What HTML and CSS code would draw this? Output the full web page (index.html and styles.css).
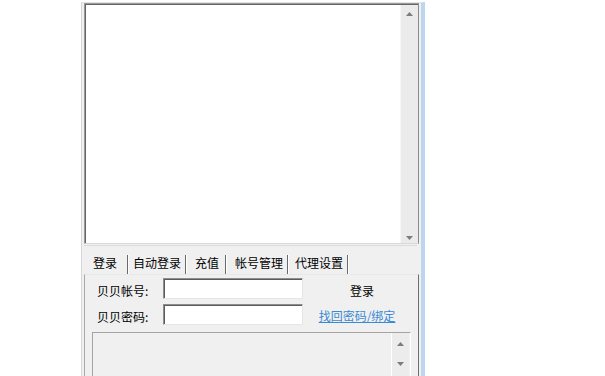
FILE: index.html
```html
<!DOCTYPE html>
<html lang="zh">
<head>
<meta charset="utf-8">
<title>登录</title>
<link rel="stylesheet" href="styles.css">
</head>
<body>
<div class="win">
  <div class="chat">
    <div class="chat-body"></div>
    <div class="vscroll">
      <svg class="arrow" width="9" height="6" viewBox="0 0 9 6"><path d="M4.5 1 L8 5 L1 5 Z" fill="#7c7c7c"/></svg>
      <svg class="arrow" width="9" height="6" viewBox="0 0 9 6"><path d="M1 1 L8 1 L4.5 5 Z" fill="#7c7c7c"/></svg>
    </div>
  </div>
  <div class="tabs">
    <span class="tab tab-a">登录</span>
    <span class="tab tab-b">自动登录</span>
    <span class="tab tab-c">充值</span>
    <span class="tab tab-d">帐号管理</span>
    <span class="tab tab-e">代理设置</span>
  </div>
  <div class="panel">
    <div class="form">
      <span class="label">贝贝帐号:</span>
      <span class="input"></span>
      <span class="btn">登录</span>
      <span class="label">贝贝密码:</span>
      <span class="input"></span>
      <a class="link" href="#">找回密码/绑定</a>
    </div>
    <div class="log">
      <div class="log-body"></div>
      <div class="vscroll small">
        <svg class="arrow" width="9" height="6" viewBox="0 0 9 6"><path d="M4.5 1 L8 5 L1 5 Z" fill="#7c7c7c"/></svg>
        <svg class="arrow" width="9" height="6" viewBox="0 0 9 6"><path d="M1 1 L8 1 L4.5 5 Z" fill="#7c7c7c"/></svg>
      </div>
    </div>
  </div>
</div>
</body>
</html>
```
FILE: styles.css
```css
html, body {
  margin: 0;
  padding: 0;
  background: #ffffff;
  overflow: hidden;
  height: 376px;
}
body {
  font-family: "Noto Sans CJK SC", "Noto Sans", sans-serif;
  font-size: 12px;
  font-weight: 400;
  color: #000;
}
.win {
  margin: 2px 0 0 81px;
  width: 339px;
  height: 374px;
  border-left: 1px solid #d6d6d6;
  border-right: 4px solid #bcd6ef;
  border-top: 1px solid #e4e4e4;
  background: #f0f0f0;
  display: flex;
  flex-direction: column;
  box-sizing: content-box;
}
.chat {
  margin-left: 2px;
  width: 335px;
  height: 241px;
  flex-shrink: 0;
  box-sizing: border-box;
  border: 1px solid;
  border-color: #9a9a9a #8a8a8a #d8d8d8 #9a9a9a;
  box-shadow: inset 1px 1px 0 #666666;
  background: #ffffff;
  display: flex;
  padding: 1px 0 0 1px;
}
.chat-body {
  flex: 1;
}
.vscroll {
  width: 17px;
  background: #ebebeb;
  border-left: 1px solid #f6f6f6;
  display: flex;
  flex-direction: column;
  justify-content: space-between;
  align-items: center;
  padding: 6px 0 2px;
}
.arrow {
  display: block;
}
.tabs {
  margin-top: 1px;
  height: 28px;
  flex-shrink: 0;
  border-top: 1px solid #dcdcdc;
  display: flex;
  align-items: flex-end;
  margin-left: 2px;
  width: 333px;
}
.tab {
  height: 19px;
  line-height: 16px;
  border-right: 1px solid #6a6a6a;
  box-shadow: 1px 0 0 #ffffff;
  white-space: nowrap;
  box-sizing: border-box;
}
.tab-a { width: 44px; padding-left: 9px; }
.tab-b { width: 58px; padding-left: 5px; }
.tab-c { width: 40px; padding-left: 9px; }
.tab-d { width: 62px; padding-left: 9px; }
.tab-e { width: 60px; padding-left: 7px; }
.panel {
  flex: 1;
  margin-left: 2px;
  width: 335px;
  box-sizing: border-box;
  border-left: 1px solid #a8a8a8;
  border-right: 1px solid #6e6e6e;
  border-top: 1px solid #e8e8e8;
  background: #f0f0f0;
  padding-top: 3px;
}
.form {
  margin-left: 12px;
  display: grid;
  grid-template-columns: 66px 140px 108px;
  grid-auto-rows: 21px;
  row-gap: 5px;
  align-items: center;
}
.label {
  white-space: nowrap;
  padding-top: 3px;
}
.input {
  height: 21px;
  box-sizing: border-box;
  background: #ffffff;
  border: 1px solid;
  border-color: #8d8d8d #e6e6e6 #e6e6e6 #8d8d8d;
  box-shadow: inset 1px 1px 0 #5c5c5c;
}
.btn {
  justify-self: center;
  padding-left: 10px;
  padding-top: 3px;
}
.link {
  justify-self: center;
  color: #3b8ad4;
  text-decoration: underline;
  padding-top: 1px;
}
.log {
  margin: 7px 0 0 7px;
  width: 319px;
  height: 50px;
  box-sizing: border-box;
  border: 1px solid;
  border-color: #a4a4a4 #ffffff #ffffff #a4a4a4;
  background: #f0f0f0;
  display: flex;
}
.log-body {
  flex: 1;
}
.vscroll.small {
  background: #ececec;
  border-left: 1px solid #ffffff;
  padding: 8px 0 8px;
  justify-content: flex-start;
  gap: 14px;
  margin-right: 1px;
}
```
